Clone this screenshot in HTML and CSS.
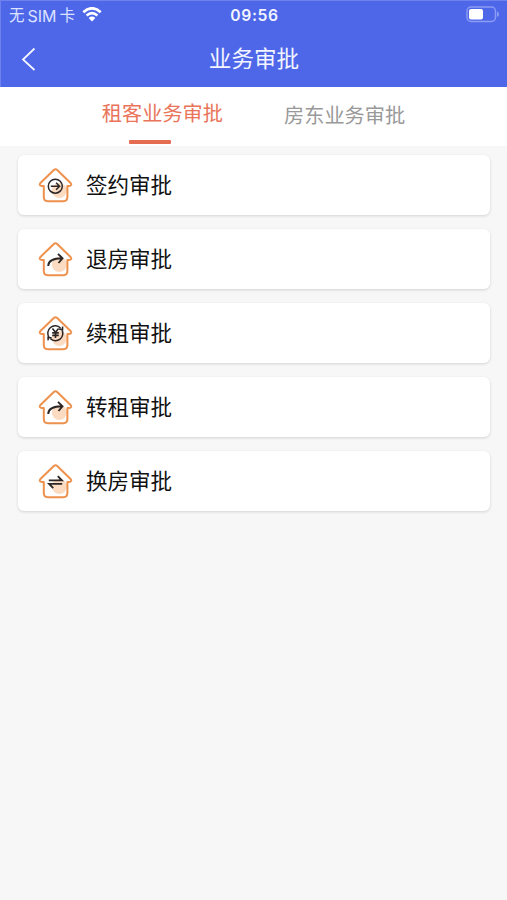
FILE: index.html
```html
<!DOCTYPE html>
<html lang="zh-CN">
<head>
<meta charset="utf-8">
<title>业务审批</title>
<link rel="stylesheet" href="styles.css">
</head>
<body>
<svg class="defs" aria-hidden="true">
  <symbol id="house" viewBox="0 0 36 36">
    <circle class="blob" cx="22.3" cy="23.5" r="7.5"/>
    <path class="roof" d="M16.8 3Q18.5 1.6 20.2 3L33.6 16Q35.4 18.5 32.4 19H30.4V30Q30.4 34.2 26.2 34.2H10.8Q6.8 34.2 6.8 30V19H4.6Q1.6 18.5 3.4 16Z"/>
  </symbol>
</svg>
<header class="header">
  <div class="status">
    <div class="carrier"><span>无</span><span class="sim">SIM</span><span>卡</span>
      <svg class="wifi" viewBox="0 0 20 15"><path class="arc" d="M1.3 5.2Q10-2.6 18.7 5.2M4.6 8.6Q10 3.8 15.4 8.6"/><path class="dot" d="M6.7 11Q10 8.2 13.3 11L10 14.5Z"/></svg>
    </div>
    <time class="clock">09:56</time>
    <svg class="battery" viewBox="0 0 34 17"><rect class="shell" x="1" y="1" width="28.5" height="14.5" rx="4"/><rect class="charge" x="3" y="3" width="14" height="10.5" rx="2"/><path class="tip" d="M31 5.5Q33 6 33 8.2T31 11Z"/></svg>
  </div>
  <div class="navbar">
    <svg class="back" viewBox="0 0 16 24"><path d="M13.5 1.5 2 12.5 13.5 23"/></svg>
    <h1 class="title">业务审批</h1>
  </div>
</header>
<nav class="tabs">
  <a class="tab active">租客业务审批</a>
  <a class="tab">房东业务审批</a>
</nav>
<main class="list">
  <div class="card"><svg class="icon" viewBox="0 0 36 36"><use href="#house"/><g class="ink"><circle cx="18.3" cy="19.2" r="7"/><path d="M13.8 19.2H22.3M19.1 15.7 22.6 19.2 19.1 22.7"/></g></svg><span>签约审批</span></div>
  <div class="card"><svg class="icon" viewBox="0 0 36 36"><use href="#house"/><g class="ink bold"><path d="M11.2 25Q11.5 17.3 25 17.3M21 12.8 25.5 17.3 21.5 22"/></g></svg><span>退房审批</span></div>
  <div class="card"><svg class="icon" viewBox="0 0 36 36"><use href="#house"/><g class="ink"><path d="M12.2 22.6A7.4 7.4 0 0 1 23.6 13.2M24.8 14.6A7.4 7.4 0 0 1 13.4 23.8M22.2 14.2 25.6 14.6 25.6 11.6M14.6 22.8 11 22.4 11.2 25.4"/><path class="yen" d="M15.4 13.6 18.5 17.3 21.6 13.6M18.5 17.3V23M15.2 17.9H21.8M15.2 20.4H21.8"/></g></svg><span>续租审批</span></div>
  <div class="card"><svg class="icon" viewBox="0 0 36 36"><use href="#house"/><g class="ink bold"><path d="M11.2 25Q11.5 17.3 25 17.3M21 12.8 25.5 17.3 21.5 22"/></g></svg><span>转租审批</span></div>
  <div class="card"><svg class="icon" viewBox="0 0 36 36"><use href="#house"/><g class="ink bold"><path d="M11.8 17.4H24.8L20.8 13.2M25.2 20.9H12.2L16.2 25.1"/></g></svg><span>换房审批</span></div>
</main>
</body>
</html>
```

FILE: styles.css
```css
* { box-sizing: border-box; }
body {
  margin: 0;
  min-height: 900px;
  background: #f7f7f7;
  font-family: "Liberation Sans", "Noto Sans CJK SC", sans-serif;
}
svg { display: block; flex: none; }
.defs { width: 0; height: 0; position: absolute; }
.header {
  height: 87px;
  background: #4e67e9;
  color: #f2f4ff;
  border-top: 1px solid #6d82ec;
  border-left: 1px solid #6d82ec;
}
.status {
  height: 28px;
  display: grid;
  grid-template-columns: 1fr auto 1fr;
  align-items: center;
  padding: 0 7px 0 8px;
}
.carrier {
  display: flex;
  align-items: center;
  font-size: 15.5px;
  line-height: 28px;
  color: #dce2ff;
}
.carrier span { padding-top: 1px; }
.carrier .sim { margin: 0 3px; padding-top: 0; font-family: Inter, sans-serif; font-size: 16px; }
.wifi { width: 20px; height: 15px; margin: 0 0 2px 7px; }
.arc { fill: none; stroke: #fff; stroke-width: 2.7; }
.dot { fill: #fff; }
.clock { font: 600 15.7px/28px Inter, sans-serif; letter-spacing: .6px; }
.battery { width: 34px; height: 17px; margin-bottom: 2px; justify-self: end; }
.shell { fill: none; stroke: #8c9df4; stroke-width: 1.4; }
.charge { fill: #fff; }
.tip { fill: #8c9df4; }
.navbar {
  height: 58px;
  display: grid;
  grid-template-columns: 1fr auto 1fr;
  align-items: center;
  padding: 0 20px;
}
.back { width: 16px; height: 24px; }
.back path { fill: none; stroke: #f2f4ff; stroke-width: 1.8; }
.title { margin: 0; padding-top: 2px; font-size: 22.6px; font-weight: 400; line-height: 58px; }
.tabs {
  height: 59px;
  display: flex;
  justify-content: center;
  gap: 61px;
  background: #fff;
}
.tab { font-size: 20.2px; line-height: 59px; color: #999; }
.active {
  display: flex;
  flex-direction: column;
  line-height: 55px;
  color: #e9745a;
}
.active::after {
  content: "";
  width: 42px;
  height: 4px;
  margin: -2px 0 0 27px;
  background: #e56c50;
  border-radius: 1px;
}
.list {
  display: flex;
  flex-direction: column;
  gap: 14px;
  padding: 9px 17px 0 18px;
}
.card {
  height: 60px;
  display: flex;
  align-items: center;
  gap: 13px;
  padding-left: 19px;
  background: #fff;
  border-radius: 6px;
  box-shadow: 0 1px 3px rgba(0, 0, 0, .15);
  color: #111;
  font-size: 21.5px;
  line-height: 60px;
}
.card span { padding-top: 2px; }
.icon { width: 36px; height: 36px; }
.blob { fill: #fbdcc2; }
.roof { fill: none; stroke: #ee914d; stroke-width: 2; stroke-linejoin: round; }
.ink { fill: none; stroke: #2b2626; stroke-width: 1.5; }
.ink .yen { stroke-width: 1.6; }
.bold { stroke-width: 1.9; }
```
